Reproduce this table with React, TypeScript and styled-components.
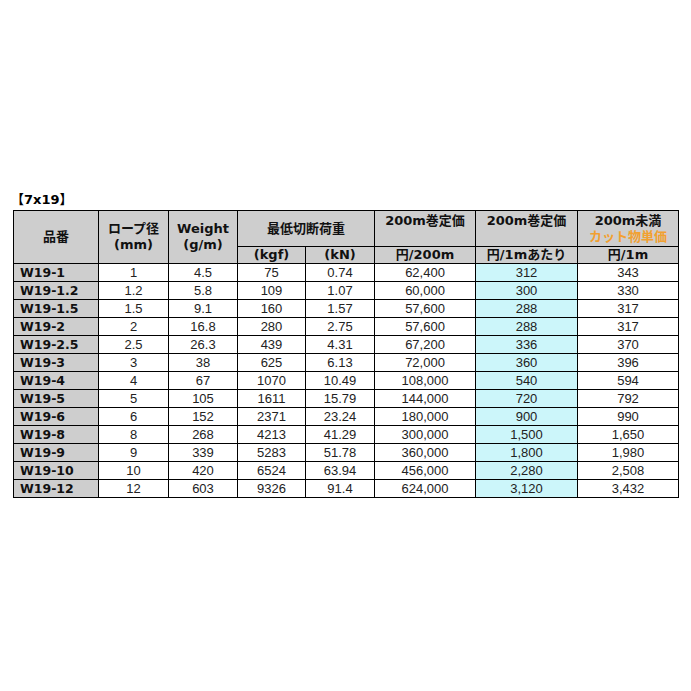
import styled, { createGlobalStyle } from 'styled-components'

const GlobalStyle = createGlobalStyle`
  body {
    margin: 0;
    background: #fff;
    font-family: 'Liberation Sans', 'Noto Sans CJK JP', sans-serif;
    color: #000;
  }
`

type Row = [string, string, string, string, string, string, string, string]

const rows: Row[] = [
  ['W19-1', '1', '4.5', '75', '0.74', '62,400', '312', '343'],
  ['W19-1.2', '1.2', '5.8', '109', '1.07', '60,000', '300', '330'],
  ['W19-1.5', '1.5', '9.1', '160', '1.57', '57,600', '288', '317'],
  ['W19-2', '2', '16.8', '280', '2.75', '57,600', '288', '317'],
  ['W19-2.5', '2.5', '26.3', '439', '4.31', '67,200', '336', '370'],
  ['W19-3', '3', '38', '625', '6.13', '72,000', '360', '396'],
  ['W19-4', '4', '67', '1070', '10.49', '108,000', '540', '594'],
  ['W19-5', '5', '105', '1611', '15.79', '144,000', '720', '792'],
  ['W19-6', '6', '152', '2371', '23.24', '180,000', '900', '990'],
  ['W19-8', '8', '268', '4213', '41.29', '300,000', '1,500', '1,650'],
  ['W19-9', '9', '339', '5283', '51.78', '360,000', '1,800', '1,980'],
  ['W19-10', '10', '420', '6524', '63.94', '456,000', '2,280', '2,508'],
  ['W19-12', '12', '603', '9326', '91.4', '624,000', '3,120', '3,432'],
]

const widths = [85, 70, 69, 68, 69, 101, 102, 101]

export default function App() {
  return (
    <>
      <GlobalStyle />
      <Page>
        <Title>【7x19】</Title>
        <Table>
          <colgroup>
            {widths.map((w, i) => (
              <col key={i} style={{ width: w }} />
            ))}
          </colgroup>
          <thead>
            <HeadRowTop>
              <Head rowSpan={2}>品番</Head>
              <Head rowSpan={2}>
                ロープ径
                <br />
                (mm)
              </Head>
              <Head rowSpan={2}>
                Weight
                <br />
                (g/m)
              </Head>
              <Head colSpan={2}>最低切断荷重</Head>
              <Head $top>200m巻定価</Head>
              <Head $top>200m巻定価</Head>
              <Head $top>
                200m未満
                <br />
                <Orange>カット物単価</Orange>
              </Head>
            </HeadRowTop>
            <HeadRowBottom>
              <Head>(kgf)</Head>
              <Head>(kN)</Head>
              <Head>円/200m</Head>
              <Head>円/1mあたり</Head>
              <Head>円/1m</Head>
            </HeadRowBottom>
          </thead>
          <tbody>
            {rows.map((r) => (
              <DataRow key={r[0]}>
                <Code>{r[0]}</Code>
                {r.slice(1).map((v, i) => (
                  <Cell key={i} $cyan={i === 5}>
                    {v}
                  </Cell>
                ))}
              </DataRow>
            ))}
          </tbody>
        </Table>
      </Page>
    </>
  )
}

const Page = styled.div`
  padding: 192px 0 0 13px;
`

const Title = styled.div`
  font-family: 'DejaVu Sans', 'Noto Sans CJK JP', sans-serif;
  font-weight: bold;
  font-size: 13px;
  height: 18px;
  line-height: 16px;
  margin-left: -2px;
`

const Table = styled.table`
  border-collapse: collapse;
  table-layout: fixed;
  width: 666px;
  border: 1px solid #000;
`

const HeadRowTop = styled.tr`
  height: 36px;
`

const HeadRowBottom = styled.tr`
  height: 17px;
`

const DataRow = styled.tr`
  height: 18px;
`

const Head = styled.th<{ $top?: boolean }>`
  background: #cecece;
  border: 1px solid #000;
  font-family: 'DejaVu Sans', 'Noto Sans CJK JP', sans-serif;
  font-weight: bold;
  font-size: 13px;
  line-height: 16px;
  padding: 0;
  text-align: center;
  vertical-align: ${(p) => (p.$top ? 'top' : 'middle')};
  padding-top: ${(p) => (p.$top ? '2px' : '0')};
  color: #111;
`

const Orange = styled.span`
  color: #f2a030;
`

const Code = styled.td`
  background: #cecece;
  border: 1px solid #000;
  font-family: 'DejaVu Sans', sans-serif;
  font-weight: bold;
  font-size: 12.5px;
  padding: 0 0 0 6px;
  line-height: 16px;
  color: #111;
`

const Cell = styled.td<{ $cyan?: boolean }>`
  background: ${(p) => (p.$cyan ? '#ccf6fa' : '#fff')};
  border: 1px solid #000;
  font-size: 13px;
  line-height: 16px;
  padding: 0;
  text-align: center;
  color: #222;
`
